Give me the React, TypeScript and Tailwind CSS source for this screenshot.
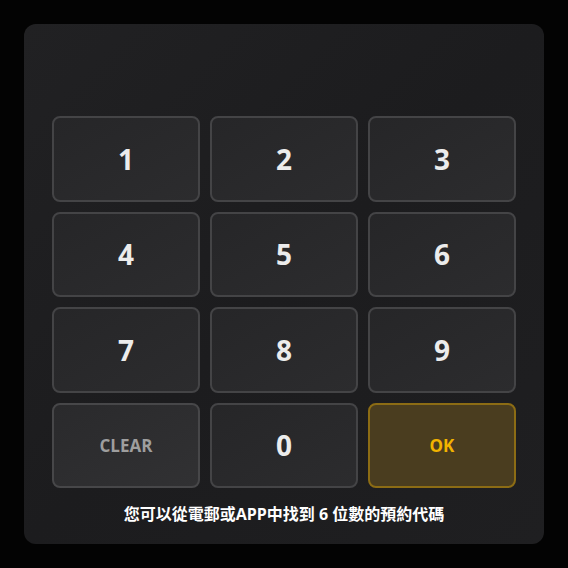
const keys = ['1', '2', '3', '4', '5', '6', '7', '8', '9'];

function Key({ label }: { label: string }) {
  return (
    <button className="h-[85.5px] rounded-lg border-2 border-[#444446] bg-gradient-to-br from-[#262628] to-[#2c2c2e] text-[28px] font-bold text-[#ececec]">
      {label}
    </button>
  );
}

export default function App() {
  return (
    <div
      className="min-h-screen w-full bg-[#030303] p-6"
      style={{ fontFamily: '"Open Sans", "Noto Sans", "Noto Sans CJK TC", sans-serif' }}
    >
      <div className="flex h-[520px] w-[520px] flex-col rounded-xl bg-gradient-to-br from-[#212123] via-[#1c1c1e] to-[#1f1f21] px-7 pt-[92px]">
        <div className="grid grid-cols-3 gap-x-[10px] gap-y-[10px]">
          {keys.map((k) => (
            <Key key={k} label={k} />
          ))}
          <button className="h-[85.5px] rounded-lg border-2 border-[#474749] bg-gradient-to-br from-[#2a2a2c] to-[#313133] text-[17px] font-bold text-[#9e9e9e]">
            CLEAR
          </button>
          <Key label="0" />
          <button className="h-[85.5px] rounded-lg border-2 border-[#8c6c14] bg-[#4a3d1f] text-[17px] font-bold text-[#f2b300]">
            OK
          </button>
        </div>
        <p className="mt-[14px] text-center text-[16px] font-bold leading-6 text-white">
          您可以從電郵或APP中找到 6 位數的預約代碼
        </p>
      </div>
    </div>
  );
}
